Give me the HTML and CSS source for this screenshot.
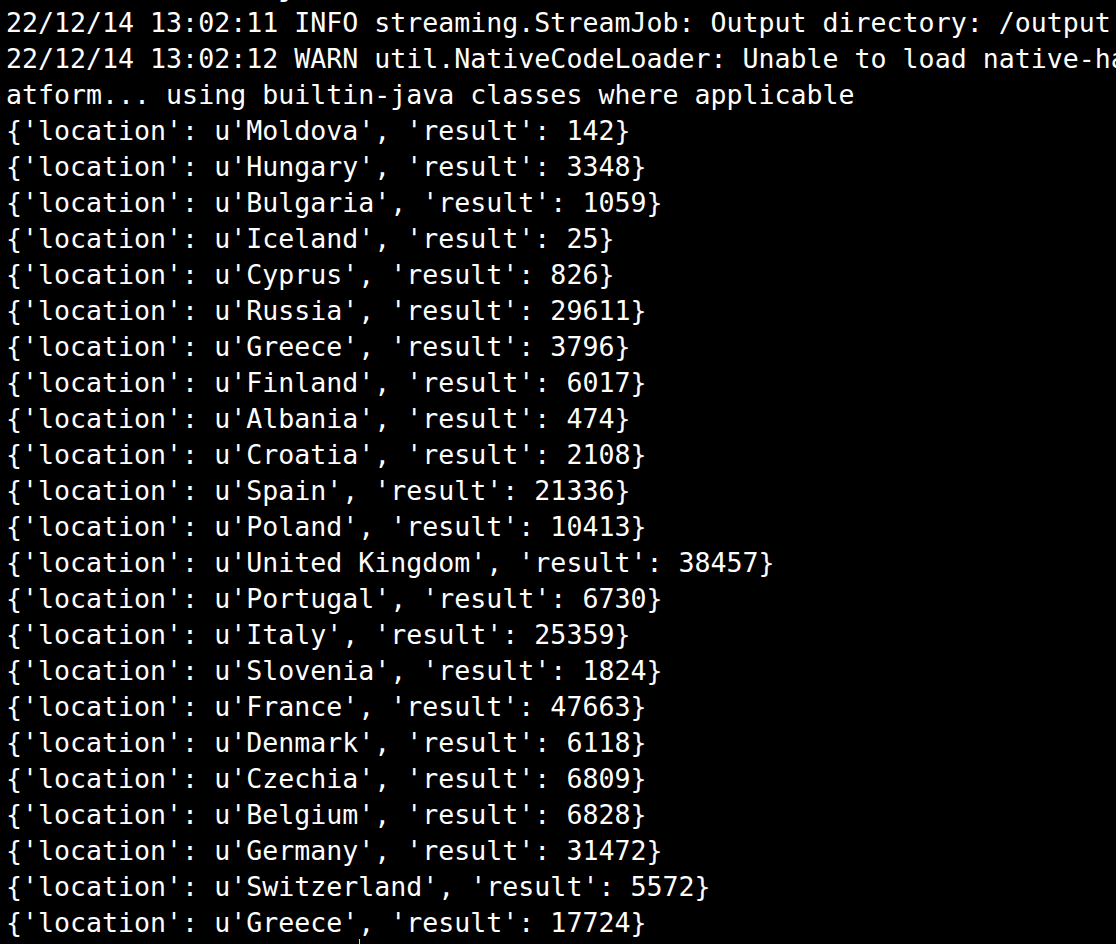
FILE: index.html
```html
<!DOCTYPE html>
<html lang="en">
<head>
<meta charset="utf-8">
<title>Terminal</title>
<link rel="stylesheet" href="styles.css">
</head>
<body>
<main class="terminal">
<pre class="output"><span class="prev">                 j</span>
22/12/14 13:02:11 INFO streaming.StreamJob: Output directory: /output
22/12/14 13:02:12 WARN util.NativeCodeLoader: Unable to load native-hadoop library for your pl
atform... using builtin-java classes where applicable
{'location': u'Moldova', 'result': 142}
{'location': u'Hungary', 'result': 3348}
{'location': u'Bulgaria', 'result': 1059}
{'location': u'Iceland', 'result': 25}
{'location': u'Cyprus', 'result': 826}
{'location': u'Russia', 'result': 29611}
{'location': u'Greece', 'result': 3796}
{'location': u'Finland', 'result': 6017}
{'location': u'Albania', 'result': 474}
{'location': u'Croatia', 'result': 2108}
{'location': u'Spain', 'result': 21336}
{'location': u'Poland', 'result': 10413}
{'location': u'United Kingdom', 'result': 38457}
{'location': u'Portugal', 'result': 6730}
{'location': u'Italy', 'result': 25359}
{'location': u'Slovenia', 'result': 1824}
{'location': u'France', 'result': 47663}
{'location': u'Denmark', 'result': 6118}
{'location': u'Czechia', 'result': 6809}
{'location': u'Belgium', 'result': 6828}
{'location': u'Germany', 'result': 31472}
{'location': u'Switzerland', 'result': 5572}
{'location': u'Greece', 'result': 17724}</pre>
<span class="ibeam"></span>
</main>
</body>
</html>
```
FILE: styles.css
```css
html, body {
  margin: 0;
  padding: 0;
  background: #000;
  width: 1116px;
  height: 944px;
  overflow: hidden;
}
.terminal {
  position: relative;
  width: 1116px;
  height: 944px;
  overflow: hidden;
  background: #000;
}
.output {
  margin: -31px 0 0 0;
  padding: 0 0 0 6px;
  font-family: "DejaVu Sans Mono", monospace;
  font-size: 26.6px;
  line-height: 36px;
  color: #ffffff;
  white-space: pre;
}
.prev {
  color: #ffffff;
}
.ibeam {
  position: absolute;
  left: 359px;
  top: 939px;
  width: 1px;
  height: 6px;
  background: #cfcfcf;
}
```
